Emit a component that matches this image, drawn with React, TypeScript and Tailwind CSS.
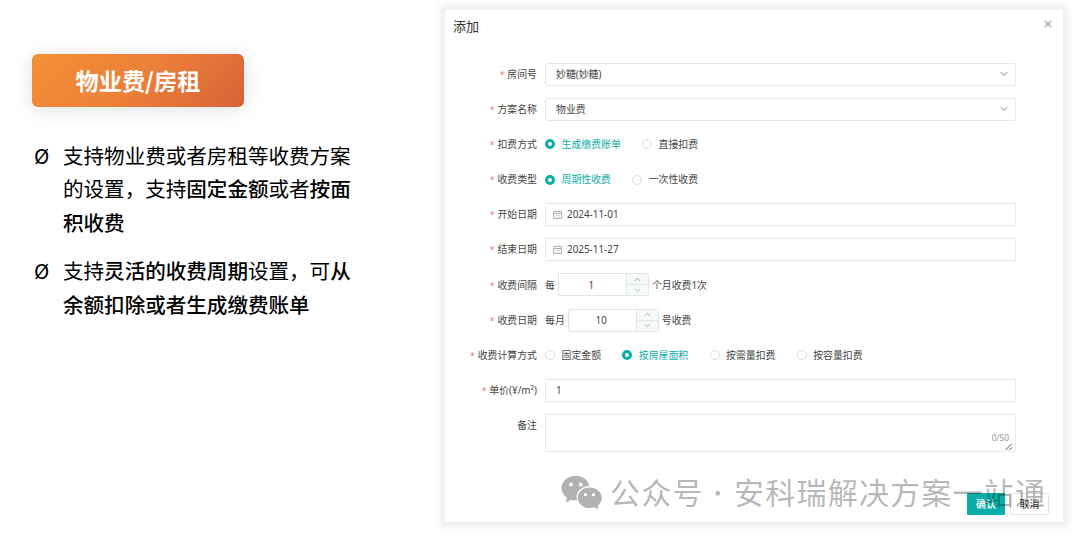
import clsx from "clsx";
import { ChevronDown, ChevronUp, X } from "lucide-react";
import type { ReactNode } from "react";

export default function App() {
  return (
    <div className="relative flex h-[537px] w-[1080px] overflow-hidden bg-white font-['Noto_Sans','Noto_Sans_CJK_SC',sans-serif]">
      <Intro />
      <Dialog />
      <Watermark />
    </div>
  );
}

function Intro() {
  return (
    <section className="w-[445px] shrink-0 pl-8 pt-[54px] font-['Noto_Sans_CJK_SC',sans-serif] text-black">
      <h1 className="flex h-[53px] w-[212px] items-center justify-center rounded-md bg-linear-[135deg] from-[#f39035] via-[#eb8038] to-[#d66238] pb-px text-[23.2px] font-bold text-white shadow-[0_2px_20px_rgba(0,0,0,0.13)]">
        物业费/房租
      </h1>
      <ul className="mt-8 space-y-[15px] text-[20.55px] leading-[33.4px]">
        <Bullet>
          支持物业费或者房租等收费方案
          <br />
          的设置，支持<b className="font-medium">固定金额</b>或者<b className="font-medium">按面</b>
          <br />
          <b className="font-medium">积收费</b>
        </Bullet>
        <Bullet>
          支持<b className="font-medium">灵活的收费周期</b>设置，可<b className="font-medium">从</b>
          <br />
          <b className="font-medium">余额扣除或者生成缴费账单</b>
        </Bullet>
      </ul>
    </section>
  );
}

function Bullet({ children }: { children: ReactNode }) {
  return (
    <li className="flex whitespace-nowrap">
      <span className="w-[31px] shrink-0 pl-0.5">Ø</span>
      <div>{children}</div>
    </li>
  );
}

function Dialog() {
  return (
    <section className="mt-2.5 flex h-[512px] w-[618px] shrink-0 flex-col bg-white text-[9.9px] text-[#444] shadow-[0_0_8px_5px_#eeeeee]">
      <header className="flex h-[52.6px] shrink-0 justify-between pl-2 pr-[9px] pt-1.5">
        <h2 className="text-[13px] leading-[21px] text-[#333]">添加</h2>
        <X className="mt-0.5 h-3 w-3 text-[#a5a8ad]" strokeWidth={2.5} />
      </header>

      <form className="flex flex-col gap-[12.15px]">
        <Row label="房间号">
          <Select value="妙糖(妙糖)" />
        </Row>
        <Row label="方案名称">
          <Select value="物业费" />
        </Row>
        <Row label="扣费方式">
          <Radio label="生成缴费账单" checked />
          <Radio label="直接扣费" />
        </Row>
        <Row label="收费类型">
          <Radio label="周期性收费" checked />
          <Radio label="一次性收费" />
        </Row>
        <Row label="开始日期">
          <DateInput value="2024-11-01" />
        </Row>
        <Row label="结束日期">
          <DateInput value="2025-11-27" />
        </Row>
        <Row label="收费间隔">
          <Stepper before="每" value="1" after="个月收费1次" />
        </Row>
        <Row label="收费日期">
          <Stepper before="每月" value="10" after="号收费" />
        </Row>
        <Row label="收费计算方式">
          <Radio label="固定金额" />
          <Radio label="按房屋面积" checked />
          <Radio label="按需量扣费" />
          <Radio label="按容量扣费" />
        </Row>
        <Row label="单价(¥/m²)">
          <Field className="pl-2.5">1</Field>
        </Row>
        <Row label="备注" required={false}>
          <div className="relative h-[38px] w-[471px] self-start rounded-[2px] border border-[#e8e8e8]">
            <span className="absolute bottom-[7px] right-1.5 text-[8.3px] leading-3 text-[#909399]">0/50</span>
            <svg viewBox="0 0 8 8" className="absolute bottom-0 right-0.5 h-2 w-2 stroke-[#555]" fill="none">
              <path d="M0.5 7 L6.5 1 M4.5 7 L7 4.5" />
            </svg>
          </div>
        </Row>
      </form>

      <footer className="mt-auto flex justify-end gap-[5px] pb-[7px] pr-3.5">
        <button className="h-[22px] w-[38px] rounded-[1px] bg-[#0aada8] font-medium text-white">确认</button>
        <button className="h-[22px] w-[39px] rounded-[2px] border border-[#e4e4e4] bg-white text-[#333]">取消</button>
      </footer>
    </section>
  );
}

function Row({ label, required = true, children }: { label: string; required?: boolean; children: ReactNode }) {
  return (
    <div className="flex h-[23px] items-center whitespace-nowrap">
      <label className="mr-2 w-[92px] shrink-0 text-right">
        {required && <span className="mr-[3px] text-[8px] text-[#f56c6c]">*</span>}
        {label}
      </label>
      {children}
    </div>
  );
}

function Field({ className, children }: { className?: string; children: ReactNode }) {
  return (
    <div className={clsx("flex h-[23px] w-[471px] items-center rounded-[2px] border border-[#e8e8e8]", className)}>
      {children}
    </div>
  );
}

function Select({ value }: { value: string }) {
  return (
    <Field className="justify-between pl-2.5 pr-[5px]">
      {value}
      <ChevronDown className="h-3 w-3 text-[#b8bbc0]" strokeWidth={2.3} />
    </Field>
  );
}

function DateInput({ value }: { value: string }) {
  return (
    <Field className="gap-[5px] pl-[7px]">
      <svg viewBox="0 0 9 9" className="h-[9px] w-[9px] stroke-[#b0b3b8]" fill="none">
        <path d="M0.5 1.5h8v7h-8zM0.5 3.5h8M2.5 0.5v1M6.5 0.5v1" />
        <path d="M2 5.5h5M2 7h5" strokeOpacity="0.5" />
      </svg>
      {value}
    </Field>
  );
}

function Radio({ label, checked }: { label: string; checked?: boolean }) {
  return (
    <span className={clsx("mr-[21.3px] flex items-center gap-[6.5px]", checked && "text-[#0aada8]")}>
      <span
        className={clsx(
          "h-2.5 w-2.5 shrink-0 rounded-full",
          checked ? "border-[3.3px] border-[#0aada8]" : "border border-[#dcdcdc]",
        )}
      />
      {label}
    </span>
  );
}

function Stepper({ before, value, after }: { before: string; value: string; after: string }) {
  return (
    <div className="flex items-center gap-[3px]">
      {before}
      <div className="flex h-[23px] w-[91px] rounded-[2px] border border-[#e2e4e6]">
        <span className="flex flex-1 items-center justify-center pr-0.5">{value}</span>
        <span className="flex w-[22px] flex-col border-l border-[#e2e4e6] bg-[#f4f9f9] text-[#a3a6ab]">
          <span className="flex flex-1 items-center justify-center border-b border-[#e2e4e6]">
            <ChevronUp className="h-[9px] w-[9px]" strokeWidth={2.5} />
          </span>
          <span className="flex flex-1 items-center justify-center">
            <ChevronDown className="h-[9px] w-[9px]" strokeWidth={2.5} />
          </span>
        </span>
      </div>
      {after}
    </div>
  );
}

function Watermark() {
  return (
    <div className="absolute left-[561px] top-[471px] flex whitespace-nowrap font-['Noto_Sans_CJK_SC',sans-serif] text-[30px] font-normal leading-10 tracking-[1.2px] text-black/30">
      <svg viewBox="0 0 44 36" className="mr-[5px] mt-1 h-9 w-11 shrink-0" aria-hidden="true">
        <path
          fill="#b2b2b2"
          fillRule="evenodd"
          d="M15 .8C7 .8.6 6.300.6 13c0 4 2 7.400 5.200 9.600L5 27.500l5-2.800c1.600.4 3.300.6 5 .6h1.200c-.4-1-.6-2-.6-3 0-6.300 5.400-11 12.800-11.200C27.300 5.200 21.800.8 15 .8zM10 7.600a1.900 1.900 0 1 1 0 3.800 1.900 1.900 0 0 1 0-3.800zM19.700 7.600a1.900 1.900 0 1 1 0 3.800 1.900 1.900 0 0 1 0-3.800z"
        />
        <path
          fill="#b2b2b2"
          fillRule="evenodd"
          d="M28.700 12.600C22 12.600 16.800 17.100 16.800 22.900S22 33.100 28.700 33.100c1.700 0 3.300-.3 4.700-.8l4.100 2.400-.9-4c2.500-1.900 4.200-4.700 4.200-7.800 0-5.800-5.500-10.300-12.100-10.300zM24.500 18.100a1.600 1.600 0 1 1 0 3.200 1.600 1.600 0 0 1 0-3.200zM32.500 18.100a1.600 1.600 0 1 1 0 3.200 1.600 1.600 0 0 1 0-3.200z"
        />
      </svg>
      <span>公众号</span>
      <span className="w-[30.500px] pr-px text-center text-[22px]">·</span>
      <span>安科瑞解决方案一站通</span>
    </div>
  );
}
